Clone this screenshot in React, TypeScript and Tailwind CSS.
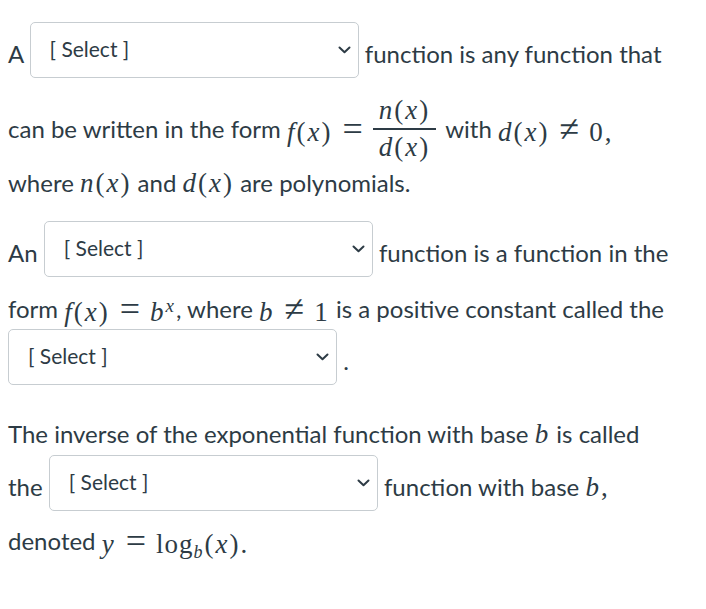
import React from "react";

function Chevron() {
  return (
    <svg width="13" height="8" viewBox="0 0 13 8" className="shrink-0" aria-hidden="true">
      <polyline points="1.5,1.5 6.5,6.2 11.5,1.5" fill="none" stroke="#2d3b45" strokeWidth="2" strokeLinecap="round" strokeLinejoin="round" />
    </svg>
  );
}

function Select() {
  return (
    <div className="flex h-[56px] w-[329px] shrink-0 items-center justify-between rounded-[5px] border border-[#c7cdd1] bg-white pl-[19px] pr-[7px]">
      <span className="pb-[2px] text-[21px] text-[#2d3b45]">[ Select ]</span>
      <Chevron />
    </div>
  );
}

// math text in a serif face, variables in italic
function M({ children }: { children: React.ReactNode }) {
  return (
    <span className="font-['Liberation_Serif','DejaVu_Serif',serif] text-[27px] leading-none tracking-[2px]">
      {children}
    </span>
  );
}

function V({ children }: { children: React.ReactNode }) {
  return <i className="italic">{children}</i>;
}

// relation sign (=, ≠) with thick spacing
function Op({ children }: { children: React.ReactNode }) {
  return <span className="mx-[10px] inline-block text-[36px] tracking-normal">{children}</span>;
}

function Fraction() {
  return (
    <span className="mr-[9px] inline-flex flex-col items-center font-['Liberation_Serif','DejaVu_Serif',serif] text-[27px] leading-none tracking-[2px]">
      <span className="px-[6px] pb-[4px]">
        <V>n</V>(<V>x</V>)
      </span>
      <span className="h-[1.5px] w-full bg-[#2d3b45]" />
      <span className="px-[6px] pt-[4px]">
        <V>d</V>(<V>x</V>)
      </span>
    </span>
  );
}

export default function App() {
  return (
    <div className="h-[609px] w-[706px] overflow-hidden bg-white pl-2 font-['Lato','Noto_Sans',sans-serif] text-[24px] text-[#2d3b45]">
      {/* first statement */}
      <div className="mt-[22px] flex h-[56px] items-center whitespace-pre">
        <span className="pt-2">A </span>
        <Select />
        <span className="pt-2"> function is any function that</span>
      </div>
      <div className="mt-[17px] flex h-[68px] items-center whitespace-pre">
        <span>can be written in the form </span>
        <M>
          <V>f</V>(<V>x</V>)<Op>=</Op>
        </M>
        <Fraction />
        <span>with </span>
        <M>
          <V>d</V>(<V>x</V>)<Op>≠</Op>0,
        </M>
      </div>
      <div className="mt-[5px] flex h-[30px] items-center whitespace-pre">
        <span>where </span>
        <M>
          <V>n</V>(<V>x</V>)
        </M>
        <span> and </span>
        <M>
          <V>d</V>(<V>x</V>)
        </M>
        <span> are polynomials.</span>
      </div>

      {/* second statement */}
      <div className="mt-[23px] flex h-[56px] items-center whitespace-pre">
        <span className="pt-2">An </span>
        <Select />
        <span className="pt-2"> function is a function in the</span>
      </div>
      <div className="mt-[17px] flex h-[30px] items-center whitespace-pre">
        <span>form </span>
        <M>
          <V>f</V>(<V>x</V>)<Op>=</Op>
          <V>b</V>
          <sup className="text-[19px]">
            <V>x</V>
          </sup>
        </M>
        <span>, where </span>
        <M>
          <V>b</V>
          <Op>≠</Op>1
        </M>
        <span> is a positive constant called the</span>
      </div>
      <div className="mt-[5px] flex h-[56px] items-center whitespace-pre">
        <Select />
        <span className="pt-2"> .</span>
      </div>

      {/* third statement */}
      <div className="mt-[34px] flex h-[30px] items-center whitespace-pre">
        <span>The inverse of the exponential function with base </span>
        <M>
          <V>b</V>
        </M>
        <span> is called</span>
      </div>
      <div className="mt-[6px] flex h-[56px] items-center whitespace-pre">
        <span className="pt-2">the </span>
        <Select />
        <span className="pt-2"> function with base </span>
        <span className="pt-2">
          <M>
            <V>b</V>,
          </M>
        </span>
      </div>
      <div className="mt-[15px] flex h-[30px] items-center whitespace-pre">
        <span>denoted </span>
        <M>
          <V>y</V>
          <Op>=</Op>
          <span className="tracking-[1px]">log</span>
          <sub className="text-[18px]">
            <V>b</V>
          </sub>
          (<V>x</V>).
        </M>
      </div>
    </div>
  );
}
